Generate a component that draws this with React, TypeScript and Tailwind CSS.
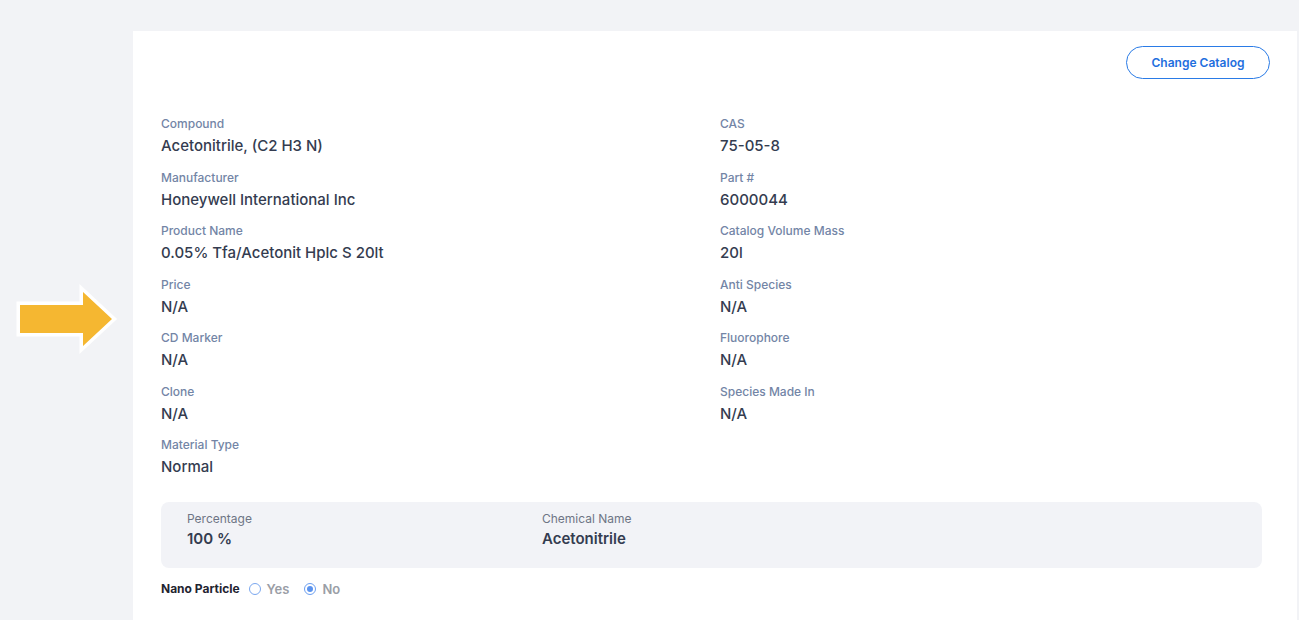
const fields = [
  { label: "Compound", value: "Acetonitrile, (C2 H3 N)" },
  { label: "CAS", value: "75-05-8" },
  { label: "Manufacturer", value: "Honeywell International Inc" },
  { label: "Part #", value: "6000044" },
  { label: "Product Name", value: "0.05% Tfa/Acetonit Hplc S 20lt" },
  { label: "Catalog Volume Mass", value: "20l" },
  { label: "Price", value: "N/A" },
  { label: "Anti Species", value: "N/A" },
  { label: "CD Marker", value: "N/A" },
  { label: "Fluorophore", value: "N/A" },
  { label: "Clone", value: "N/A" },
  { label: "Species Made In", value: "N/A" },
  { label: "Material Type", value: "Normal" },
];

function Pointer() {
  return (
    <svg width="133" height="80" viewBox="0 280 133 80" className="absolute left-0 top-[280px]">
      <polygon
        points="20,305 83,305 83,292 112,319 83,346 83,333 20,333"
        fill="#f5b731"
        stroke="#ffffff"
        strokeWidth="7"
        strokeLinejoin="miter"
        paintOrder="stroke"
      />
    </svg>
  );
}

function Radio({ label, checked }: { label: string; checked?: boolean }) {
  return (
    <label className="flex items-center gap-[6px]">
      <span
        className={`flex h-[12px] w-[12px] items-center justify-center rounded-full border ${
          checked ? "border-[#6c9ff0]" : "border-[#7aa7ef]"
        } bg-white`}
      >
        {checked && <span className="h-[6px] w-[6px] rounded-full bg-[#5b93ee]" />}
      </span>
      <span className="text-[13px] font-semibold leading-4 text-[#9a9ea6]">{label}</span>
    </label>
  );
}

export default function App() {
  return (
    <div
      className="relative min-h-[620px] bg-[#f2f3f6] pt-[31px] pl-[133px] pr-[2px]"
      style={{ fontFamily: "Inter, 'Noto Sans', sans-serif" }}
    >
      <Pointer />
      <div className="min-h-[589px] bg-white pl-[28px] pr-[27px] pt-[15px]">
        <div className="flex justify-end">
          <button
            type="button"
            className="h-[33px] w-[144px] rounded-full border border-[#2a7be6] text-[12px] font-semibold text-[#1f6fde]"
          >
            Change Catalog
          </button>
        </div>

        <div className="mt-[37px] grid grid-cols-[559px_1fr] gap-y-[12.5px]">
          {fields.map((f) => (
            <div key={f.label}>
              <p className="text-[12px] font-medium leading-4 text-[#7385a6]">{f.label}</p>
              <p className="mt-[3px] text-[15px] font-medium leading-[22px] text-[#343c50]">{f.value}</p>
            </div>
          ))}
        </div>

        <div className="mr-[8px] mt-[24px] flex h-[66px] rounded-lg bg-[#f2f3f7] pl-[26px] pt-[9px]">
          <div className="w-[355px]">
            <p className="text-[12px] leading-4 text-[#6e7585]">Percentage</p>
            <p className="mt-[1px] text-[15px] font-semibold leading-[22px] text-[#343c50]">100 %</p>
          </div>
          <div>
            <p className="text-[12px] leading-4 text-[#6e7585]">Chemical Name</p>
            <p className="mt-[1px] text-[15px] font-semibold leading-[22px] text-[#343c50]">Acetonitrile</p>
          </div>
        </div>

        <div className="mt-[13px] flex items-center gap-[9px] pb-[20px]">
          <span className="text-[12px] font-bold leading-4 text-[#1f2430]">Nano Particle</span>
          <div className="flex items-center gap-[15px]">
            <Radio label="Yes" />
            <Radio label="No" checked />
          </div>
        </div>
      </div>
    </div>
  );
}
